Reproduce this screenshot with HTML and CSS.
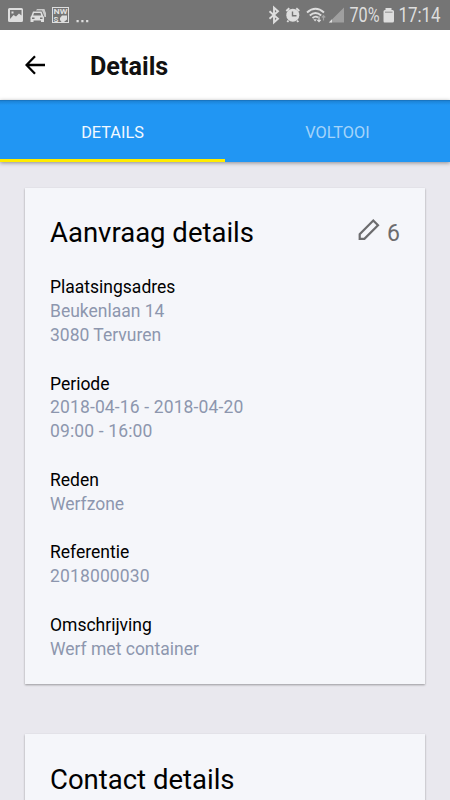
FILE: index.html
```html
<!DOCTYPE html>
<html lang="nl">
<head>
<meta charset="utf-8">
<title>Details</title>
<link rel="stylesheet" href="styles.css">
</head>
<body>
<div class="status">
  <svg class="tray" width="100" height="30" viewBox="0 0 100 30">
    <path fill-rule="evenodd" d="M9.500 8h12a1.500 1.500 0 0 1 1.500 1.500v11a1.500 1.500 0 0 1-1.500 1.500h-12a1.500 1.500 0 0 1-1.500-1.500v-11a1.500 1.500 0 0 1 1.500-1.500zM10 10v9l3.500-4 2.500 1.500 3-3 2.500 2V10zM11.500 11.500h2v2h-2z"/>
    <path fill-rule="evenodd" d="M33 11.500h8.500l1.500 4 1 1.500v5h-3v-1.500h-7.500V22h-3v-5l1-1.500zM34 13l-.8 2.500h8L40.500 13zM32 17.500v1.500h2.500v-1.500zM40 17.500v1.500h2.500v-1.500z"/>
    <path d="M36 10.500l1-1.500h7.500l1 3 .5 1v4h-1.500l-1-3-1.500-3.500z" opacity=".8"/>
    <path fill-rule="evenodd" d="M52 7h17v16H52zM53 8v14h15V8z"/>
    <text class="badge"><tspan x="53.500" y="14.300" textLength="14" lengthAdjust="spacingAndGlyphs">NW</tspan><tspan x="53.500" y="21.800">S</tspan></text>
    <path d="M60 18l2-2.500h5v4l-3 2.500h-2.500l-1.500-2z"/>
    <path d="M76.500 20h2.200v2.200h-2.200zM81.300 20h2.200v2.200h-2.200zM86.100 20h2.200v2.200h-2.200z"/>
  </svg>
  <svg class="system" width="182" height="30" viewBox="268 0 182 30">
    <path class="line" d="M269.500 11.200l8.500 7.600-4 3.500V7.700l4 3.500-8.500 7.600"/>
    <circle cx="292.800" cy="15.200" r="6.500"/>
    <path class="line" d="M286.300 11l3-2.800M299.300 11l-3-2.800M288.500 20.500l-1.200 1.500M297 20.500l1.300 1.500"/>
    <path class="cut" d="M292.500 11.500v4.200h4"/>
    <path class="line" d="M307 12.500q8.500-7.500 17 0M309.800 15.500q5.700-5 11.400 0M312.500 18q3-2.500 5.500-.5"/>
    <path d="M313.300 19.200h3.500l-1.700 2.200z"/>
    <path class="thin" d="M319 16.500v5M317.300 19.800l1.700 1.900 1.700-1.900"/>
    <path class="thin dim" d="M323.500 20.500v-5M321.800 17.500l1.700-1.900 1.700 1.900"/>
    <path opacity=".4" d="M344 7.500v15h-15z"/>
    <path d="M332 19.300v3.200h-3.200z"/>
    <text class="clock" x="349.500" y="22" textLength="30" lengthAdjust="spacingAndGlyphs">70%</text>
    <path d="M385.500 8h6v2h1q1.500 0 1.500 1.500V21q0 1.500-1.500 1.500h-8Q383.500 22.500 383.500 21v-9.500q0-1.500 1.500-1.500h.5z"/>
    <path class="drained" d="M385 11.500h7.500V13H385z"/>
    <text class="clock" x="398.500" y="22" textLength="42" lengthAdjust="spacingAndGlyphs">17:14</text>
  </svg>
</div>
<header class="bar">
  <svg class="back" width="22" height="20" viewBox="0 0 22 20"><path d="M20 10H2M10 1.200L1.500 10l8.500 8.800"/></svg>
  <h1>Details</h1>
</header>
<nav class="tabs">
  <div class="tab active">DETAILS</div>
  <div class="tab">VOLTOOI</div>
</nav>
<main>
  <section class="card">
    <div class="head">
      <h2>Aanvraag details</h2>
      <div class="edit">
        <svg width="24" height="24" viewBox="0 0 24 24"><path d="M2.700 20.800v-4.700L16.300 2.500l4.700 4.700L7.400 20.800z"/></svg>
        <span>6</span>
      </div>
    </div>
    <dl>
      <div><dt>Plaatsingsadres</dt><dd>Beukenlaan 14</dd><dd>3080 Tervuren</dd></div>
      <div><dt>Periode</dt><dd class="num">2018-04-16 - 2018-04-20</dd><dd class="num">09:00 - 16:00</dd></div>
      <div><dt>Reden</dt><dd>Werfzone</dd></div>
      <div><dt>Referentie</dt><dd class="num">2018000030</dd></div>
      <div><dt>Omschrijving</dt><dd>Werf met container</dd></div>
    </dl>
  </section>
  <section class="card">
    <div class="head"><h2>Contact details</h2></div>
  </section>
</main>
</body>
</html>
```
FILE: styles.css
```css
* { box-sizing: border-box; margin: 0; padding: 0; }
body {
  height: 800px;
  overflow: hidden;
  background: #e9e8ee;
  font-family: Roboto, sans-serif;
  color: #000;
  display: flex;
  flex-direction: column;
}
.status {
  flex: none;
  height: 30px;
  background: #757575;
  display: flex;
  justify-content: space-between;
}
.status svg { fill: #dedede; }
.badge { font-size: 8px; font-weight: 700; }
.clock { font-size: 19.500px; }
.status .line { fill: none; stroke: #dedede; stroke-width: 1.9; }
.status .thin { fill: none; stroke: #dedede; stroke-width: 1.2; }
.status .dim { opacity: .45; }
.status .cut { fill: none; stroke: #757575; stroke-width: 1.4; }
.status .drained { fill: #a8a8a8; }
.bar {
  flex: none;
  height: 70px;
  padding-left: 25px;
  display: flex;
  align-items: center;
  background: #fff;
}
.back { fill: none; stroke: #000; stroke-width: 2.3; margin-right: 43px; }
h1 { font-size: 25.200px; font-weight: 700; line-height: 30px; padding-top: 3px; color: #111; }
.tabs {
  flex: none;
  height: 62px;
  display: flex;
  background: linear-gradient(#1669ae 0, #1c83d6 1px, #2196f3 5px);
  box-shadow: 0 1px 4px rgba(0, 0, 0, .4);
}
.tab {
  flex: 1;
  padding-top: 4px;
  text-align: center;
  font-size: 16.300px;
  line-height: 57px;
  color: rgba(255, 255, 255, .6);
}
.tab.active {
  color: #f2f9ff;
  border-bottom: 3px solid #ffeb00;
}
main { flex: 1; min-height: 0; overflow: hidden; padding: 25.500px 25px 0; }
.card {
  background: #f5f6fa;
  padding: 27px 25px 22.500px;
  margin-bottom: 50px;
  box-shadow: 0 1px 2px rgba(0, 0, 0, .35);
}
.head { height: 35px; display: flex; justify-content: space-between; align-items: center; }
h2 { font-size: 27.500px; font-weight: 400; line-height: 35px; padding-top: 1px; }
.card + .card h2 { padding-top: 2px; }
.edit { display: flex; align-items: center; gap: 6px; font-size: 23px; line-height: 35px; color: #6c6c6e; }
.edit svg { fill: none; stroke: #6c6c6e; stroke-width: 2.2; margin-top: -4px; }
.edit span { padding-top: 2px; }
dl { padding-top: 26.800px; display: flex; flex-direction: column; gap: 25px; font-size: 17.500px; line-height: 23.750px; }
dd { color: #8d96ae; }
.num { letter-spacing: .14px; }
```
